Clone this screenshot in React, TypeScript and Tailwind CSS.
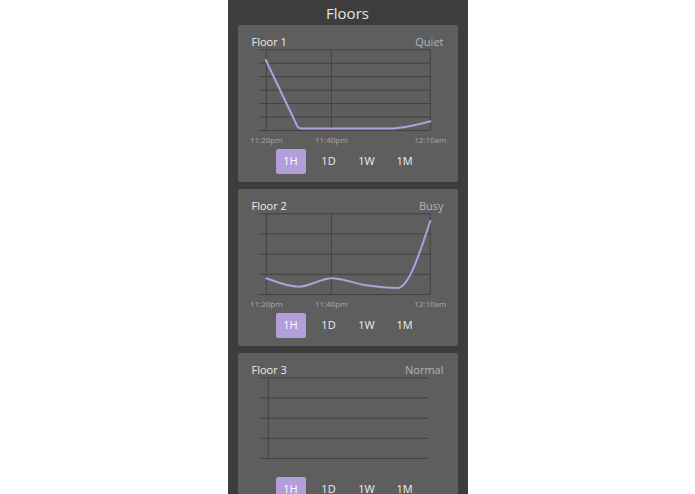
import React from "react";

type Pt = [number, number];

function monotonePath(pts: Pt[]): string {
  const n = pts.length;
  if (n < 2) return "";
  const sign = (v: number) => (v < 0 ? -1 : 1);
  const t: number[] = new Array(n).fill(0);
  for (let i = 1; i < n - 1; i++) {
    const [x0, y0] = pts[i - 1];
    const [x1, y1] = pts[i];
    const [x2, y2] = pts[i + 1];
    const h0 = x1 - x0;
    const h1 = x2 - x1;
    const s0 = (y1 - y0) / h0;
    const s1 = (y2 - y1) / h1;
    const p = (s0 * h1 + s1 * h0) / (h0 + h1);
    t[i] = (sign(s0) + sign(s1)) * Math.min(Math.abs(s0), Math.abs(s1), 0.5 * Math.abs(p)) || 0;
  }
  {
    const [x0, y0] = pts[0];
    const [x1, y1] = pts[1];
    const h = x1 - x0;
    t[0] = n > 2 ? (3 * (y1 - y0) / h - t[1]) / 2 : (y1 - y0) / h;
  }
  {
    const [x0, y0] = pts[n - 2];
    const [x1, y1] = pts[n - 1];
    const h = x1 - x0;
    t[n - 1] = n > 2 ? (3 * (y1 - y0) / h - t[n - 2]) / 2 : (y1 - y0) / h;
  }
  let d = `M${pts[0][0]},${pts[0][1]}`;
  for (let i = 0; i < n - 1; i++) {
    const [x0, y0] = pts[i];
    const [x1, y1] = pts[i + 1];
    const dx = (x1 - x0) / 3;
    d += ` C${x0 + dx},${y0 + dx * t[i]} ${x1 - dx},${y1 - dx * t[i + 1]} ${x1},${y1}`;
  }
  return d;
}

const X0 = 14.3;
const X1 = 178.3;
const step = (X1 - X0) / 5;

type Floor = {
  name: string;
  status: string;
  rows: number;
  data: number[] | null;
  path?: string;
};

const floors: Floor[] = [
  {
    name: "Floor 1",
    status: "Quiet",
    rows: 7,
    data: [11, 79.3, 79.5, 79.5, 79.6, 72.7],
    path: "M13.8,11 L45.2,77 Q46.6,79.4 49.5,79.4 L138,79.6 C150,79.6 160,77.2 178.3,72.3",
  },
  { name: "Floor 2", status: "Busy", rows: 5, data: [65.3, 73.7, 65.3, 72, 75, 8] },
  { name: "Floor 3", status: "Normal", rows: 5, data: null },
];

const GRID = "#414141";
const LINE = "#b39ddb";

function Chart({ floor }: { floor: Floor }) {
  const top = 0.8;
  const bottom = 81.5;
  const lines: number[] = [];
  for (let i = 0; i < floor.rows; i++) {
    lines.push(top + ((bottom - top) * i) / (floor.rows - 1));
  }
  if (!floor.data) {
    return (
      <svg width="192" height="96" className="block overflow-visible">
        {lines.map((y, i) => (
          <line key={i} x1={8.7} x2={176} y1={y} y2={y} stroke={GRID} strokeWidth={1} />
        ))}
        <line x1={16.3} x2={16.3} y1={top} y2={bottom} stroke={GRID} strokeWidth={1} />
      </svg>
    );
  }
  const pts: Pt[] = floor.data.map((y, i) => [X0 + step * i, y]);
  const d = floor.path ?? monotonePath(pts);
  return (
    <svg width="192" height="96" className="block overflow-visible">
      {lines.map((y, i) => (
        <line key={i} x1={6.7} x2={X1} y1={y} y2={y} stroke={GRID} strokeWidth={1} />
      ))}
      <line x1={X0} x2={X0} y1={top} y2={bottom} stroke={GRID} strokeWidth={1} />
      <line x1={79.3} x2={79.3} y1={top} y2={bottom} stroke={GRID} strokeWidth={1} />
      <line x1={X1} x2={X1} y1={top} y2={bottom} stroke={GRID} strokeWidth={1} />
      <path d={d} fill="none" stroke={LINE} strokeWidth={2} strokeLinejoin="round" strokeLinecap="round" />
      <g fill="#a9a9a9" fontSize="8" fontFamily="'Open Sans', 'Noto Sans', sans-serif">
        <text x={X0} y={94.2} textAnchor="middle">11:20pm</text>
        <text x={79.3} y={94.2} textAnchor="middle">11:40pm</text>
        <text x={X1} y={94.2} textAnchor="middle">12:10am</text>
      </g>
    </svg>
  );
}

function Card({ floor }: { floor: Floor }) {
  return (
    <div className="w-[220px] h-[157px] shrink-0 rounded-[2px] bg-[#5e5e5e] px-[14px] pt-[10px] flex flex-col">
      <div className="flex justify-between items-center h-[14px] text-[11px] leading-[14px]">
        <span className="text-[#ececec]">{floor.name}</span>
        <span className="text-[#b4b4b4]">{floor.status}</span>
      </div>
      <Chart floor={floor} />
      <div className="mt-[4px] flex justify-center gap-[8px]">
        {["1H", "1D", "1W", "1M"].map((r, i) => (
          <div
            key={r}
            className={
              i === 0
                ? "w-[30px] h-[25px] rounded-[2px] bg-[#b39ddb] text-white text-[11px] flex items-center justify-center"
                : "w-[30px] h-[25px] text-[#eeeeee] text-[11px] flex items-center justify-center"
            }
          >
            {r}
          </div>
        ))}
      </div>
    </div>
  );
}

export default function App() {
  return (
    <div
      className="w-full h-[494px] bg-white flex justify-center overflow-hidden"
      style={{ fontFamily: "'Open Sans', 'Noto Sans', sans-serif" }}
    >
      <div className="w-[240px] h-full bg-[#3d3d3d] flex flex-col items-center overflow-hidden">
        <div className="h-[25px] shrink-0 pt-[2px] flex items-center justify-center text-[15px] text-[#e4e4e4]">
          Floors
        </div>
        <div className="flex flex-col gap-[7px]">
          {floors.map((f) => (
            <Card key={f.name} floor={f} />
          ))}
        </div>
      </div>
    </div>
  );
}
